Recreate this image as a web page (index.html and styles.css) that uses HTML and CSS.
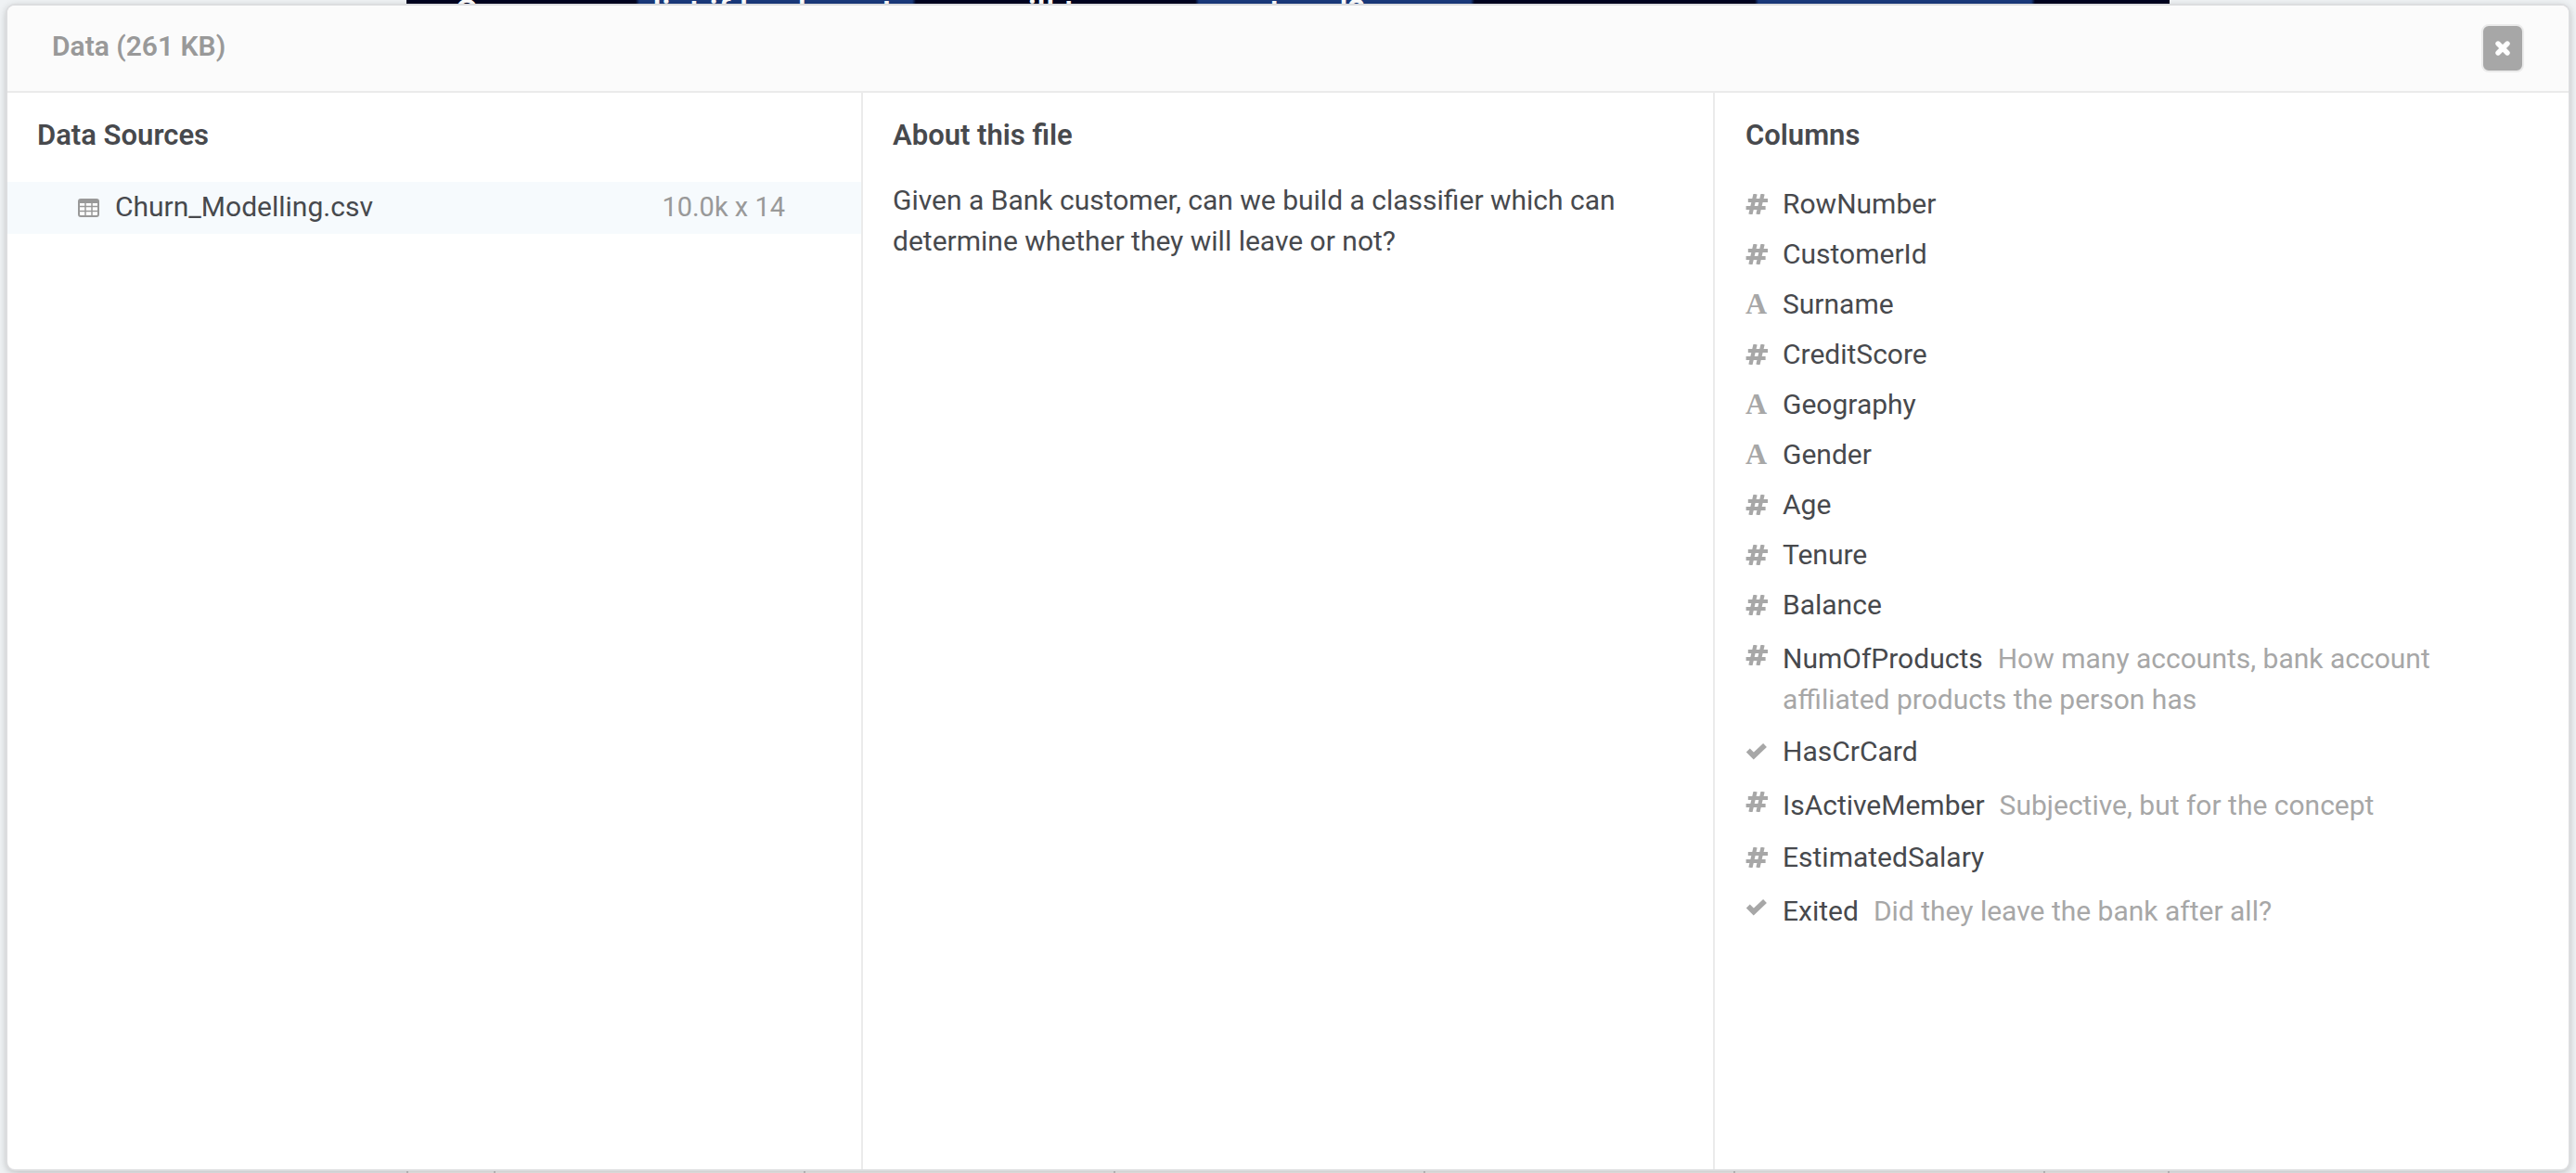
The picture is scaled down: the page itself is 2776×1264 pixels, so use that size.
FILE: index.html
```
<!DOCTYPE html>
<html lang="en">
<head>
<meta charset="utf-8">
<title>Data (261 KB)</title>
<link rel="stylesheet" href="styles.css">
</head>
<body>
<svg class="sprite" aria-hidden="true">
  <symbol id="icon-hash" viewBox="0 0 24 22">
    <g fill="none" stroke="currentColor" stroke-width="4.2">
      <path d="M10.600 0 5.400 22M18.600 0 13.400 22"/>
      <path d="M2.800 7H24M0.600 15H21.600"/>
    </g>
  </symbol>
  <symbol id="icon-check" viewBox="0 0 24 22">
    <path fill="none" stroke="currentColor" stroke-width="5.600" d="M2.800 9.600 8.800 15.600 21 4"/>
  </symbol>
</svg>

<div class="page" aria-hidden="true">
  <div class="banner">Can we as a list if bank customers will turn over next end?</div>
  <div class="grid-strip"><i></i><i></i><i></i><i></i><i></i><i></i><i></i><i></i></div>
</div>

<main class="modal">
  <header class="modal-header">
    <h1 class="modal-title">Data (261 KB)</h1>
    <button class="close" type="button" aria-label="Close">
      <svg width="16" height="16" viewBox="0 0 16 16"><path d="M3 3 13 13M13 3 3 13" stroke="#fff" stroke-width="5.400" stroke-linecap="round"/></svg>
    </button>
  </header>
  <div class="panes">
    <section class="pane sources">
      <h2 class="pane-title">Data Sources</h2>
      <a class="source" href="#churn">
        <svg class="table-icon" width="24" height="20" viewBox="0 0 24 20"><rect x="1" y="1" width="21" height="18" rx="2" fill="#fff" stroke="#999" stroke-width="2"/><path d="M1 3H22" stroke="#999" stroke-width="4"/><path d="M1 8.500H22M1 13.500H22M8 3V19M15 3V19" stroke="#999" stroke-width="1.500"/></svg>
        <span class="source-name">Churn_Modelling.csv</span>
        <span class="source-size">10.0k x 14</span>
      </a>
    </section>
    <section class="pane about">
      <h2 class="pane-title">About this file</h2>
      <p class="about-text">Given a Bank customer, can we build a classifier which can determine whether they will leave or not?</p>
    </section>
    <section class="pane columns">
      <h2 class="pane-title">Columns</h2>
      <ul class="column-list">
        <li class="column"><svg class="type"><use href="#icon-hash"/></svg><span>RowNumber</span></li>
        <li class="column"><svg class="type"><use href="#icon-hash"/></svg><span>CustomerId</span></li>
        <li class="column"><span class="type letter">A</span><span>Surname</span></li>
        <li class="column"><svg class="type"><use href="#icon-hash"/></svg><span>CreditScore</span></li>
        <li class="column"><span class="type letter">A</span><span>Geography</span></li>
        <li class="column"><span class="type letter">A</span><span>Gender</span></li>
        <li class="column"><svg class="type"><use href="#icon-hash"/></svg><span>Age</span></li>
        <li class="column"><svg class="type"><use href="#icon-hash"/></svg><span>Tenure</span></li>
        <li class="column"><svg class="type"><use href="#icon-hash"/></svg><span>Balance</span></li>
        <li class="column described"><svg class="type"><use href="#icon-hash"/></svg><p>NumOfProducts<span class="note">How many accounts, bank account affiliated products the person has</span></p></li>
        <li class="column"><svg class="type"><use href="#icon-check"/></svg><span>HasCrCard</span></li>
        <li class="column described"><svg class="type"><use href="#icon-hash"/></svg><p>IsActiveMember<span class="note">Subjective, but for the concept</span></p></li>
        <li class="column"><svg class="type"><use href="#icon-hash"/></svg><span>EstimatedSalary</span></li>
        <li class="column described"><svg class="type"><use href="#icon-check"/></svg><p>Exited<span class="note">Did they leave the bank after all?</span></p></li>
      </ul>
    </section>
  </div>
</main>
</body>
</html>
```
FILE: styles.css
```
* { box-sizing: border-box; }

body {
  margin: 0;
  min-height: 100vh;
  display: flex;
  padding: 6px 8px 4px;
  background: #eff2f4;
  color: #47494d;
  font: 30px/44px Roboto, "Liberation Sans", sans-serif;
}

h1, h2, p, ul { margin: 0; padding: 0; }

.sprite { position: absolute; width: 0; height: 0; }

/* Page behind the dialog */
.page {
  position: absolute;
  inset: 0;
  z-index: -1;
  overflow: hidden;
  display: flex;
  flex-direction: column;
  justify-content: space-between;
  align-items: center;
}

.banner {
  width: 1900px;
  height: 40px;
  padding-left: 52px;
  overflow: hidden;
  background: linear-gradient(90deg, #000420 247px, #1a3a7c 251px 545px, #000420 549px 850px, #1a3a7c 854px 1147px, #000420 1151px 1453px, #1a3a7c 1457px 1751px, #000420 1755px);
  color: #fff;
  font-size: 38px;
  font-weight: 500;
  line-height: 28px;
  white-space: nowrap;
}

.grid-strip {
  width: 1900px;
  height: 24px;
  display: grid;
  grid-template-columns: 94px repeat(5, 1fr) 134px;
  grid-auto-flow: column;
  grid-auto-columns: 2px;
  background: #f4f4f4;
}

.grid-strip i { border-left: 2px solid #c8c8c8; }

/* Dialog */
.modal {
  flex: 1;
  display: flex;
  flex-direction: column;
  border-radius: 8px;
  background: #fff;
  box-shadow: 0 0 0 2px #dcdddf, 0 2px 10px rgba(0, 0, 0, 0.3);
}

.modal-header {
  display: flex;
  justify-content: space-between;
  align-items: flex-start;
  height: 94px;
  padding: 20px 48px 0;
  border-bottom: 2px solid #ebebeb;
  border-radius: 8px 8px 0 0;
  background: #fbfbfb;
}

.modal-title {
  color: #999;
  font-size: 30px;
  font-weight: 600;
  line-height: 48px;
}

.close {
  display: flex;
  justify-content: center;
  align-items: center;
  width: 46px;
  height: 52px;
  padding: 0;
  border: 2px solid #ebebeb;
  border-radius: 8px;
  background: #a7a7a7;
  cursor: pointer;
}

.panes {
  flex: 1;
  display: grid;
  grid-template-columns: repeat(3, 1fr);
}

.pane { padding-top: 24px; }

.about {
  padding-right: 30px;
  padding-left: 32px;
  border: solid #ebebeb;
  border-width: 0 2px;
}

.columns {
  padding-right: 80px;
  padding-left: 33px;
}

.pane-title {
  font-size: 31px;
  font-weight: 600;
  line-height: 44px;
}

.sources .pane-title { padding-left: 32px; }

.source {
  display: flex;
  align-items: center;
  height: 56px;
  margin-top: 28px;
  padding: 0 82px 0 76px;
  background: #f6fafd;
  color: #47494d;
  line-height: 44px;
  text-decoration: none;
}

.source-name,
.source-size { padding-bottom: 3px; }

.source-name { flex: 1; padding-left: 16px; }

.source-size { color: #999; font-size: 29px; }

.about-text { margin-top: 26px; }

.column-list {
  margin-top: 25px;
  list-style: none;
}

.column {
  display: flex;
  gap: 16px;
  line-height: 54px;
}

.described {
  padding: 9px 0 7px;
  line-height: 44px;
}

.type {
  flex: none;
  width: 24px;
  height: 22px;
  margin-top: 16px;
  color: #a7a7a7;
}

.described .type { margin-top: 7px; }

.letter {
  font: bold 32px/20px "Liberation Serif", serif;
}

.note {
  margin-left: 16px;
  color: #a7a7a7;
}
```
